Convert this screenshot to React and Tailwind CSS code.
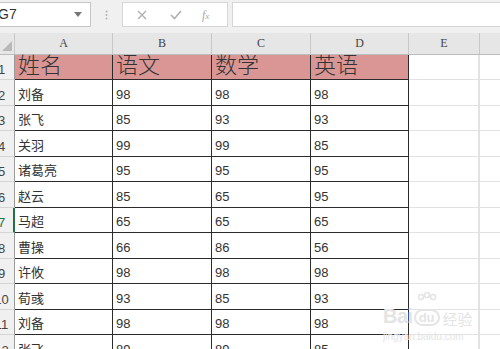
import React from 'react'

const rows = [
  ['刘备', '98', '98', '98'],
  ['张飞', '85', '93', '93'],
  ['关羽', '99', '99', '85'],
  ['诸葛亮', '95', '95', '95'],
  ['赵云', '85', '65', '95'],
  ['马超', '65', '65', '65'],
  ['曹操', '66', '86', '56'],
  ['许攸', '98', '98', '98'],
  ['荀彧', '93', '85', '93'],
  ['刘备', '98', '98', '98'],
  ['张飞', '89', '89', '85'],
]

const font = { fontFamily: '"Liberation Sans", "Noto Sans CJK SC", sans-serif' }

function RowHead({ n, active }) {
  return (
    <div
      className={
        'w-[15px] shrink-0 overflow-hidden bg-[#f0f0f0] border-b border-[#d4d4d4] flex items-end pb-[3px] ' +
        (active ? 'border-r-2 border-r-[#217346] text-[#217346]' : 'border-r border-r-[#9a9a9a] text-[#444]')
      }
    >
      <div className="w-[27px] -ml-[12px] shrink-0 text-center text-[13px] leading-none">{n}</div>
    </div>
  )
}

function Cell({ w, children, big }) {
  return (
    <div
      className={
        w +
        ' shrink-0 border-r border-b border-[#2b2b2b] flex items-end px-[3px] text-[#333] leading-none ' +
        (big ? 'text-[22px] pb-[2px] font-light' : 'text-[13px] pb-[4px]')
      }
    >
      {children}
    </div>
  )
}

function Empty() {
  return (
    <>
      <div className="w-[71px] shrink-0 border-r-2 border-b border-[#e2e2e2]" />
      <div className="flex-1 border-b border-[#e2e2e2]" />
    </>
  )
}

export default function App() {
  return (
    <div className="w-[500px] h-[349px] overflow-hidden bg-white relative" style={font}>
      {/* formula bar */}
      <div className="h-[33px] bg-[#f0f0f0] flex items-start pt-[2px]">
        <div className="w-[91px] h-[25px] bg-white border border-[#c6c6c6] border-l-0 flex items-center justify-between pr-[8px] shrink-0">
          <span className="text-[14px] text-[#333] -ml-[2px]">G7</span>
          <svg width="8" height="5" viewBox="0 0 8 5"><path d="M0 0h8L4 5z" fill="#777" /></svg>
        </div>
        <div className="w-[31px] h-[25px] flex items-center justify-center shrink-0">
          <svg width="3" height="10" viewBox="0 0 3 10">
            <circle cx="1.5" cy="1.5" r="1" fill="#b5b5b5" />
            <circle cx="1.5" cy="5" r="1" fill="#b5b5b5" />
            <circle cx="1.5" cy="8.5" r="1" fill="#b5b5b5" />
          </svg>
        </div>
        <div className="w-[106px] h-[25px] bg-white border border-[#d6d6d6] flex items-center shrink-0">
          <svg className="ml-[14px]" width="10" height="10" viewBox="0 0 10 10">
            <path d="M1 1l8 8M9 1l-8 8" stroke="#b0b0b0" strokeWidth="1.4" />
          </svg>
          <svg className="ml-[23px]" width="12" height="10" viewBox="0 0 12 10">
            <path d="M1 5l3.5 3.5L11 1" stroke="#b0b0b0" strokeWidth="1.6" fill="none" />
          </svg>
          <span
            className="ml-[20px] text-[12px] italic text-[#a8a8a8]"
            style={{ fontFamily: '"Liberation Serif", serif' }}
          >
            f<span className="text-[9px]">x</span>
          </span>
        </div>
        <div className="ml-[4px] flex-1 h-[25px] bg-white border border-[#d6d6d6] border-r-0" />
      </div>

      {/* column headers */}
      <div
        className="h-[22px] bg-[#e6e6e6] flex text-[12px] text-[#444] border-b border-[#bdbdbd]"
        style={{ fontFamily: '"Liberation Serif", serif' }}
      >
        <div className="w-[15px] shrink-0 border-r border-[#c8c8c8] flex items-end justify-end pb-[3px] pr-[2px]">
          <svg width="10" height="10" viewBox="0 0 10 10"><path d="M10 0v10H0z" fill="#b8b8b8" /></svg>
        </div>
        <div className="w-[98px] shrink-0 border-r border-[#c8c8c8] flex items-end justify-center pb-[2px]">A</div>
        <div className="w-[99px] shrink-0 border-r border-[#c8c8c8] flex items-end justify-center pb-[2px]">B</div>
        <div className="w-[99px] shrink-0 border-r border-[#c8c8c8] flex items-end justify-center pb-[2px]">C</div>
        <div className="w-[98px] shrink-0 border-r border-[#c8c8c8] flex items-end justify-center pb-[2px]">D</div>
        <div className="w-[71px] shrink-0 border-r border-[#c8c8c8] flex items-end justify-center pb-[2px]">E</div>
        <div className="flex-1" />
      </div>

      {/* header row */}
      <div className="h-[25px] flex">
        <RowHead n={1} />
        <div className="flex bg-[#da9694]">
          <Cell w="w-[98px]" big>姓名</Cell>
          <Cell w="w-[99px]" big>语文</Cell>
          <Cell w="w-[99px]" big>数学</Cell>
          <Cell w="w-[98px]" big>英语</Cell>
        </div>
        <Empty />
      </div>

      {rows.map((r, i) => (
        <div key={i} className={'flex ' + (i % 2 === 0 ? 'h-[26px]' : 'h-[25px]')}>
          <RowHead n={i + 2} active={i + 2 === 7} />
          <Cell w="w-[98px]">{r[0]}</Cell>
          <Cell w="w-[99px]">{r[1]}</Cell>
          <Cell w="w-[99px]">{r[2]}</Cell>
          <Cell w="w-[98px]">{r[3]}</Cell>
          <Empty />
        </div>
      ))}

      {/* baidu watermark */}
      <div className="absolute left-[383px] top-[292px] flex flex-col items-start text-[#e4e4e4] pointer-events-none">
        <svg className="ml-[30px]" width="28" height="14" viewBox="0 0 28 14">
          <circle cx="8" cy="5" r="2.5" fill="none" stroke="#e4e4e4" strokeWidth="1.5" />
          <circle cx="14" cy="3" r="2.5" fill="none" stroke="#e4e4e4" strokeWidth="1.5" />
          <circle cx="20" cy="5" r="2.5" fill="none" stroke="#e4e4e4" strokeWidth="1.5" />
        </svg>
        <div className="flex items-end leading-none">
          <span className="text-[20px] font-bold tracking-tight">Bai</span>
          <span className="ml-[1px] rounded-full border-2 border-[#e4e4e4] px-[3px] text-[13px] font-bold">du</span>
          <span className="ml-[3px] text-[15px]" style={{ fontFamily: '"Noto Sans CJK SC", sans-serif' }}>经验</span>
        </div>
        <span className="text-[10px] mt-[3px]">jingyan.baidu.com</span>
      </div>
    </div>
  )
}
